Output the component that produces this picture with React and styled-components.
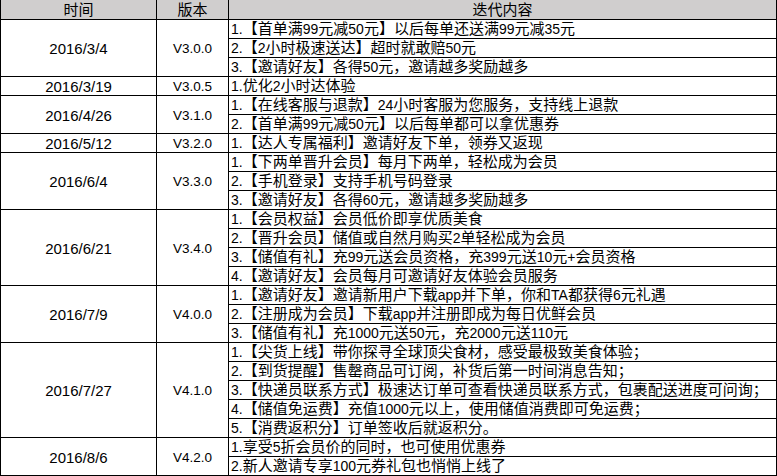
import React from "react";
import styled, { createGlobalStyle } from "styled-components";

const releases = [
  {
    date: "2016/3/4",
    version: "V3.0.0",
    items: [
      "1.【首单满99元减50元】以后每单还送满99元减35元",
      "2.【2小时极速送达】超时就敢赔50元",
      "3.【邀请好友】各得50元，邀请越多奖励越多"
    ]
  },
  {
    date: "2016/3/19",
    version: "V3.0.5",
    items: ["1.优化2小时达体验"]
  },
  {
    date: "2016/4/26",
    version: "V3.1.0",
    items: [
      "1.【在线客服与退款】24小时客服为您服务，支持线上退款",
      "2.【首单满99元减50元】以后每单都可以拿优惠券"
    ]
  },
  {
    date: "2016/5/12",
    version: "V3.2.0",
    items: ["1.【达人专属福利】邀请好友下单，领券又返现"]
  },
  {
    date: "2016/6/4",
    version: "V3.3.0",
    items: [
      "1.【下两单晋升会员】每月下两单，轻松成为会员",
      "2.【手机登录】支持手机号码登录",
      "3.【邀请好友】各得60元，邀请越多奖励越多"
    ]
  },
  {
    date: "2016/6/21",
    version: "V3.4.0",
    items: [
      "1.【会员权益】会员低价即享优质美食",
      "2.【晋升会员】储值或自然月购买2单轻松成为会员",
      "3.【储值有礼】充99元送会员资格，充399元送10元+会员资格",
      "4.【邀请好友】会员每月可邀请好友体验会员服务"
    ]
  },
  {
    date: "2016/7/9",
    version: "V4.0.0",
    items: [
      "1.【邀请好友】邀请新用户下载app并下单，你和TA都获得6元礼遇",
      "2.【注册成为会员】下载app并注册即成为每日优鲜会员",
      "3.【储值有礼】充1000元送50元，充2000元送110元"
    ]
  },
  {
    date: "2016/7/27",
    version: "V4.1.0",
    items: [
      "1.【尖货上线】带你探寻全球顶尖食材，感受最极致美食体验；",
      "2.【到货提醒】售罄商品可订阅，补货后第一时间消息告知；",
      "3.【快递员联系方式】极速达订单可查看快递员联系方式，包裹配送进度可问询；",
      "4.【储值免运费】充值1000元以上，使用储值消费即可免运费；",
      "5.【消费返积分】订单签收后就返积分。"
    ]
  },
  {
    date: "2016/8/6",
    version: "V4.2.0",
    items: [
      "1.享受5折会员价的同时，也可使用优惠券",
      "2.新人邀请专享100元券礼包也悄悄上线了"
    ]
  }
];

const GlobalStyle = createGlobalStyle`
  html, body {
    margin: 0;
    padding: 0;
    background: #ffffff;
  }
  body {
    font-family: "Liberation Sans", "Noto Sans CJK SC", sans-serif;
    font-size: 15px;
    color: #000000;
  }
`;

const Sheet = styled.div`
  width: 777px;
  border-left: 1px solid #000;
  box-sizing: border-box;
`;

const Row = styled.div`
  display: grid;
  grid-template-columns: 156px 72px 548px;
`;

const HeadCell = styled.div`
  box-sizing: border-box;
  height: 20px;
  line-height: 19px;
  text-align: center;
  background: #d0cece;
  border-right: 1px solid #000;
  border-bottom: 1px solid #000;
`;

const MergedCell = styled.div`
  box-sizing: border-box;
  display: flex;
  align-items: center;
  justify-content: center;
  padding-top: 1px;
  border-right: 1px solid #000;
  border-bottom: 1px solid #000;
`;

const ItemList = styled.div`
  display: flex;
  flex-direction: column;
  border-right: 1px solid #000;
`;

const Item = styled.div`
  box-sizing: border-box;
  height: 19px;
  line-height: 18px;
  padding-left: 2px;
  white-space: nowrap;
  border-bottom: 1px solid #000;
`;

const Latin = styled.span`
  font-size: ${p => p.$size}px;
`;

// latin runs (digits, dots, app, TA) get their own size next to the CJK text
const Mixed = ({ text, size = 14 }) =>
  text.split(/([\x20-\x7e]+)/).map((part, i) =>
    i % 2 === 1 ? (
      <Latin key={i} $size={size}>
        {part}
      </Latin>
    ) : (
      part
    )
  );

export default function App() {
  return (
    <>
      <GlobalStyle />
      <Sheet>
        <Row>
          <HeadCell>时间</HeadCell>
          <HeadCell>版本</HeadCell>
          <HeadCell>迭代内容</HeadCell>
        </Row>
        {releases.map(release => (
          <Row key={release.version}>
            <MergedCell>
              <Mixed text={release.date} size={15} />
            </MergedCell>
            <MergedCell>
              <Mixed text={release.version} size={13.5} />
            </MergedCell>
            <ItemList>
              {release.items.map(item => (
                <Item key={item}>
                  <Mixed text={item} />
                </Item>
              ))}
            </ItemList>
          </Row>
        ))}
      </Sheet>
    </>
  );
}
